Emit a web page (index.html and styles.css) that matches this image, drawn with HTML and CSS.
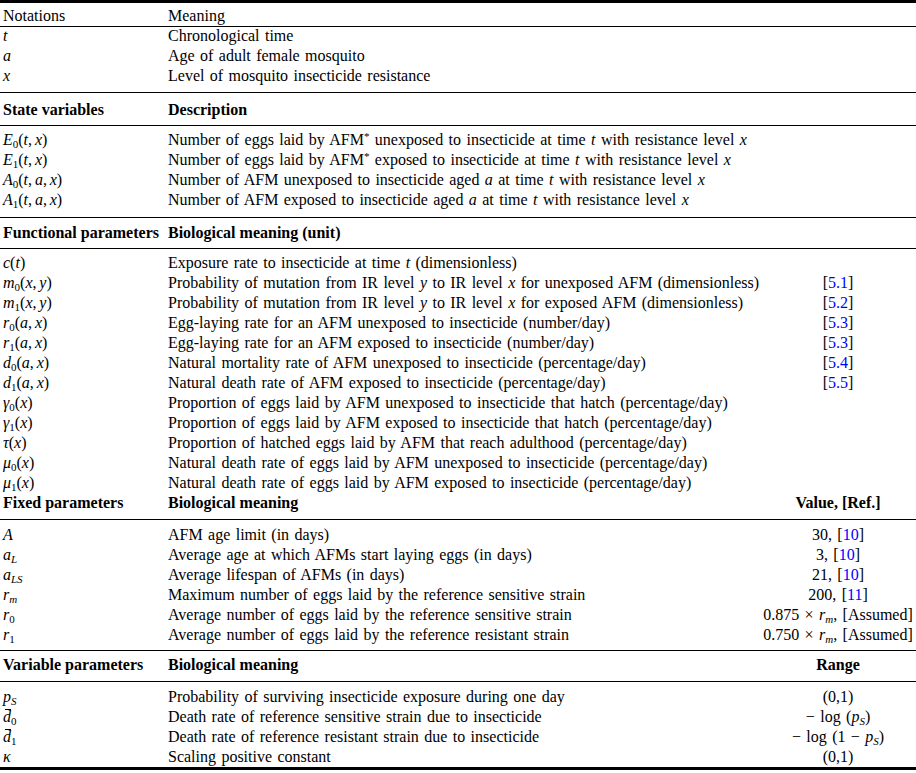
FILE: index.html
```html
<!DOCTYPE html>
<html lang="en">
<head>
  <meta charset="UTF-8">
  <meta name="viewport" content="width=device-width, initial-scale=1.0">
  <title>Model notations and parameters</title>
  <link rel="stylesheet" href="styles.css">
</head>
<body>
  <table class="notation">
    <colgroup>
      <col class="col-sym">
      <col class="col-text">
      <col class="col-value">
    </colgroup>

    <!-- Notations -->
    <tbody class="intro">
      <tr class="head"><th>Notations</th><th>Meaning</th><th></th></tr>
      <tr><td><i>t</i></td><td>Chronological time</td><td></td></tr>
      <tr><td><i>a</i></td><td>Age of adult female mosquito</td><td></td></tr>
      <tr class="last"><td><i>x</i></td><td>Level of mosquito insecticide resistance</td><td></td></tr>
    </tbody>

    <!-- State variables -->
    <tbody class="states">
      <tr class="head"><th>State variables</th><th>Description</th><th></th></tr>
      <tr class="first"><td><i>E</i><sub>0</sub>(<i>t</i>, <i>x</i>)</td><td>Number of eggs laid by AFM<sup>*</sup> unexposed to insecticide at time <i>t</i> with resistance level <i>x</i></td><td></td></tr>
      <tr><td><i>E</i><sub>1</sub>(<i>t</i>, <i>x</i>)</td><td>Number of eggs laid by AFM<sup>*</sup> exposed to insecticide at time <i>t</i> with resistance level <i>x</i></td><td></td></tr>
      <tr><td><i>A</i><sub>0</sub>(<i>t</i>, <i>a</i>, <i>x</i>)</td><td>Number of AFM unexposed to insecticide aged <i>a</i> at time <i>t</i> with resistance level <i>x</i></td><td></td></tr>
      <tr class="last"><td><i>A</i><sub>1</sub>(<i>t</i>, <i>a</i>, <i>x</i>)</td><td>Number of AFM exposed to insecticide aged <i>a</i> at time <i>t</i> with resistance level <i>x</i></td><td></td></tr>
    </tbody>

    <!-- Functional parameters -->
    <tbody class="functional">
      <tr class="head"><th>Functional parameters</th><th>Biological meaning (unit)</th><th></th></tr>
      <tr class="first"><td><i>c</i>(<i>t</i>)</td><td>Exposure rate to insecticide at time <i>t</i> (dimensionless)</td><td></td></tr>
      <tr><td><i>m</i><sub>0</sub>(<i>x</i>, <i>y</i>)</td><td>Probability of mutation from IR level <i>y</i> to IR level <i>x</i> for unexposed AFM (dimensionless)</td><td class="value">[<span class="cite">5.1</span>]</td></tr>
      <tr><td><i>m</i><sub>1</sub>(<i>x</i>, <i>y</i>)</td><td>Probability of mutation from IR level <i>y</i> to IR level <i>x</i> for exposed AFM (dimensionless)</td><td class="value">[<span class="cite">5.2</span>]</td></tr>
      <tr><td><i>r</i><sub>0</sub>(<i>a</i>, <i>x</i>)</td><td>Egg-laying rate for an AFM unexposed to insecticide (number/day)</td><td class="value">[<span class="cite">5.3</span>]</td></tr>
      <tr><td><i>r</i><sub>1</sub>(<i>a</i>, <i>x</i>)</td><td>Egg-laying rate for an AFM exposed to insecticide (number/day)</td><td class="value">[<span class="cite">5.3</span>]</td></tr>
      <tr><td><i>d</i><sub>0</sub>(<i>a</i>, <i>x</i>)</td><td>Natural mortality rate of AFM unexposed to insecticide (percentage/day)</td><td class="value">[<span class="cite">5.4</span>]</td></tr>
      <tr><td><i>d</i><sub>1</sub>(<i>a</i>, <i>x</i>)</td><td>Natural death rate of AFM exposed to insecticide (percentage/day)</td><td class="value">[<span class="cite">5.5</span>]</td></tr>
      <tr><td><i>γ</i><sub>0</sub>(<i>x</i>)</td><td>Proportion of eggs laid by AFM unexposed to insecticide that hatch (percentage/day)</td><td></td></tr>
      <tr><td><i>γ</i><sub>1</sub>(<i>x</i>)</td><td>Proportion of eggs laid by AFM exposed to insecticide that hatch (percentage/day)</td><td></td></tr>
      <tr><td><i>τ</i>(<i>x</i>)</td><td>Proportion of hatched eggs laid by AFM that reach adulthood (percentage/day)</td><td></td></tr>
      <tr><td><i>μ</i><sub>0</sub>(<i>x</i>)</td><td>Natural death rate of eggs laid by AFM unexposed to insecticide (percentage/day)</td><td></td></tr>
      <tr><td><i>μ</i><sub>1</sub>(<i>x</i>)</td><td>Natural death rate of eggs laid by AFM exposed to insecticide (percentage/day)</td><td></td></tr>
    </tbody>

    <!-- Fixed parameters -->
    <tbody class="fixed">
      <tr class="head"><th>Fixed parameters</th><th>Biological meaning</th><th class="value">Value, [Ref.]</th></tr>
      <tr class="first"><td><i>A</i></td><td>AFM age limit (in days)</td><td class="value">30, [<span class="cite">10</span>]</td></tr>
      <tr><td><i>a</i><sub><i>L</i></sub></td><td>Average age at which AFMs start laying eggs (in days)</td><td class="value">3, [<span class="cite">10</span>]</td></tr>
      <tr><td><i>a</i><sub><i>LS</i></sub></td><td>Average lifespan of AFMs (in days)</td><td class="value">21, [<span class="cite">10</span>]</td></tr>
      <tr><td><i>r</i><sub><i>m</i></sub></td><td>Maximum number of eggs laid by the reference sensitive strain</td><td class="value">200, [<span class="cite">11</span>]</td></tr>
      <tr><td><i>r</i><sub>0</sub></td><td>Average number of eggs laid by the reference sensitive strain</td><td class="value">0.875 × <i>r</i><sub><i>m</i></sub>, [Assumed]</td></tr>
      <tr class="last"><td><i>r</i><sub>1</sub></td><td>Average number of eggs laid by the reference resistant strain</td><td class="value">0.750 × <i>r</i><sub><i>m</i></sub>, [Assumed]</td></tr>
    </tbody>

    <!-- Variable parameters -->
    <tbody class="variable">
      <tr class="head"><th>Variable parameters</th><th>Biological meaning</th><th class="value">Range</th></tr>
      <tr class="first"><td><i>p</i><sub><i>S</i></sub></td><td>Probability of surviving insecticide exposure during one day</td><td class="value">(0,1)</td></tr>
      <tr><td><span class="bar"><i>d</i></span><sub>0</sub></td><td>Death rate of reference sensitive strain due to insecticide</td><td class="value">− log (<i>p</i><sub><i>S</i></sub>)</td></tr>
      <tr><td><span class="bar"><i>d</i></span><sub>1</sub></td><td>Death rate of reference resistant strain due to insecticide</td><td class="value">− log (1 − <i>p</i><sub><i>S</i></sub>)</td></tr>
      <tr class="last"><td><i>κ</i></td><td>Scaling positive constant</td><td class="value">(0,1)</td></tr>
    </tbody>
  </table>
</body>
</html>
```

FILE: styles.css
```css
* {
  margin: 0;
  padding: 0;
  box-sizing: border-box;
}

body {
  font-family: "Liberation Serif", "Times New Roman", serif;
  font-size: 16px;
  color: #000;
  background-color: #fff;
}

.notation {
  width: 916px;
  table-layout: fixed;
  border-collapse: separate;
  border-spacing: 0;
}

.col-sym {
  width: 168px;
}

.col-value {
  width: 156px;
}

th, td {
  padding-top: 1px;
  padding-bottom: 3px;
  line-height: 16px;
  text-align: left;
  vertical-align: top;
  white-space: nowrap;
}

td {
  word-spacing: 1.4px; /* the pdf spreads words a bit wider than the font does */
}

th:first-child, td:first-child {
  padding-left: 3px;
}

td:first-child {
  word-spacing: -1.2px; /* thin space after commas in the math */
}

.value {
  text-align: center;
}

.cite {
  color: #0000ff;
}

sub, sup {
  font-size: 11px;
  line-height: 0;
  font-style: normal;
}

sub {
  vertical-align: -3px;
}

sup {
  vertical-align: 5px;
}

/* bar over d for the reference death rates */
.bar {
  position: relative;
}

.bar::after {
  content: "";
  position: absolute;
  left: 2px;
  right: 0;
  top: 1px;
  border-top: 1px solid #000;
}

/* section headers and rules */
.head th {
  font-weight: bold;
  padding-top: 9px;
  padding-bottom: 7px;
  border-top: 1px solid #000;
  border-bottom: 1px solid #000;
}

.intro .head th {
  font-weight: normal;
  border-top: 3px solid #000;
  padding-top: 5px;
  padding-bottom: 2px;
}

.functional .head th {
  padding-top: 7px;
}

.fixed .head th {
  border-top: none;
  padding-top: 1px;
  padding-bottom: 8px;
}

.variable .head th {
  padding-top: 6px;
  padding-bottom: 8px;
}

.states .first td,
.functional .first td {
  padding-top: 6px;
}

.fixed .first td,
.variable .first td {
  padding-top: 7px;
}

.intro .last td {
  padding-bottom: 8px;
}

.states .last td {
  padding-bottom: 9px;
}

.fixed .last td {
  padding-bottom: 7px;
}

.variable .last td {
  padding-bottom: 2px;
  border-bottom: 3px solid #000;
}
```
